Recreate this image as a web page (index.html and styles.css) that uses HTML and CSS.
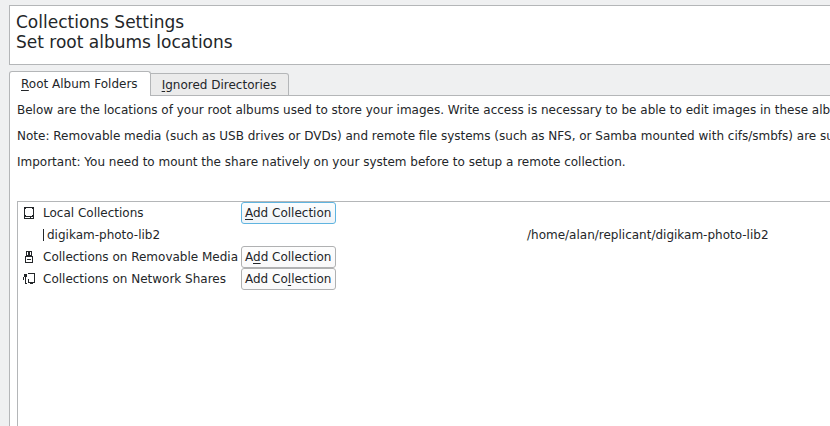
FILE: index.html
```html
<!DOCTYPE html>
<html lang="en">
<head>
<meta charset="utf-8">
<title>Collections Settings</title>
<link rel="stylesheet" href="styles.css">
</head>
<body>
<header class="title-box">
  <h1>Collections Settings</h1>
  <p>Set root albums locations</p>
</header>
<main class="tabs">
  <div class="tab-bar" role="tablist">
    <button class="tab active" type="button" role="tab" aria-selected="true" aria-controls="roots"><u>R</u>oot Album Folders</button>
    <button class="tab" type="button" role="tab" aria-selected="false"><u>I</u>gnored Directories</button>
  </div>
  <section class="panel" id="roots" role="tabpanel">
    <div class="notes">
      <p>Below are the locations of your root albums used to store your images. Write access is necessary to be able to edit images in these albums.</p>
      <p>Note: Removable media (such as USB drives or DVDs) and remote file systems (such as NFS, or Samba mounted with cifs/smbfs) are supported.</p>
      <p>Important: You need to mount the share natively on your system before to setup a remote collection.</p>
    </div>
    <div class="list">
      <table>
        <colgroup><col class="icon-col"><col class="name-col"><col class="action-col"><col></colgroup>
        <tbody>
          <tr>
            <td><svg class="icon" viewBox="0 0 12 12" aria-hidden="true"><path d="M1 0h10v12H1zM3 1v1H2v6h1v1h6V8h1V2H9V1zM2 10v1h5v-1zM8 10v1h2v-1z"/></svg></td>
            <td>Local Collections</td>
            <td><button class="add focused" type="button"><u>A</u>dd Collection</button></td>
            <td></td>
          </tr>
          <tr>
            <td></td>
            <td><span class="album">digikam-photo-lib2</span></td>
            <td></td>
            <td>/home/alan/replicant/digikam-photo-lib2</td>
          </tr>
          <tr>
            <td><svg class="icon" viewBox="0 0 12 12" aria-hidden="true"><path d="M3 0h6v5h1v7H2V5h1zM4 1v3h1V1zM7 1v3h1V1zM3 6v5h6V6zM4 8h4v1H4z"/></svg></td>
            <td>Collections on Removable Media</td>
            <td><button class="add" type="button">A<u>d</u>d Collection</button></td>
            <td></td>
          </tr>
          <tr>
            <td><svg class="icon" viewBox="0 0 12 12" aria-hidden="true"><path d="M5 0h7v10H5V6h1v3h5V1H5zM1 1h3v3H1zM0 4h1v3H0zM2 4h1v6h1v1H2zM7 10h3v1H7z"/></svg></td>
            <td>Collections on Network Shares</td>
            <td><button class="add" type="button">Add Co<u>l</u>lection</button></td>
            <td></td>
          </tr>
        </tbody>
      </table>
    </div>
  </section>
</main>
</body>
</html>
```

FILE: styles.css
```css
* {
  box-sizing: border-box;
}

body {
  display: flex;
  flex-direction: column;
  gap: 6px;
  min-height: 100vh;
  margin: 0;
  padding: 5px 0 0 9px;
  overflow: hidden;
  background: #eff0f1;
  color: #232629;
  font: 12px/16px "DejaVu Sans", sans-serif;
  white-space: nowrap;
}

h1,
p {
  margin: 0;
  font-weight: normal;
}

button {
  color: inherit;
  font: inherit;
}

u {
  text-underline-offset: 2px;
  text-decoration-thickness: 1px;
  text-decoration-skip-ink: none;
}

.title-box {
  padding: 6px 6px 12px;
  border: 1px solid #b4b6b8;
  border-right: 0;
  background: #fff;
  font-size: 17px;
  line-height: 20px;
}

.title-box h1 {
  font-size: inherit;
}

.tabs {
  display: flex;
  flex: 1;
  flex-direction: column;
}

.tab-bar {
  display: flex;
  align-items: flex-end;
}

.tab {
  height: 23px;
  margin-bottom: -1px;
  padding: 0 12px 0 11px;
  border: 1px solid #b4b6b8;
  border-left: 0;
  border-radius: 0 3px 0 0;
  background: #ebebeb;
}

.tab.active {
  z-index: 1;
  height: 25px;
  border-bottom: 0;
  border-left: 1px solid #b4b6b8;
  border-radius: 3px 3px 0 0;
  background: #fff;
}

.panel {
  display: flex;
  flex: 1;
  flex-direction: column;
  gap: 31px;
  padding: 6px 0 0 7px;
  border: solid #b4b6b8;
  border-width: 1px 0 0 1px;
  background: #fff;
}

.notes {
  display: flex;
  flex-direction: column;
  gap: 10px;
}

.notes p {
  overflow: hidden;
}

.list {
  flex: 1;
  border: solid #b4b6b8;
  border-width: 1px 0 0 1px;
}

table {
  width: 100%;
  border-collapse: collapse;
  table-layout: fixed;
}

.icon-col {
  width: 25px;
}

.name-col {
  width: 198px;
}

.action-col {
  width: 286px;
}

td {
  height: 22px;
  padding: 0;
}

.icon {
  display: block;
  width: 12px;
  height: 12px;
  margin-left: 5px;
  fill: #232629;
  fill-rule: evenodd;
  shape-rendering: crispEdges;
}

.album {
  display: block;
  height: 12px;
  padding-left: 3px;
  border-left: 1px solid #232629;
  line-height: 12px;
}

.add {
  display: block;
  height: 22px;
  padding: 0 4px 0 3px;
  border: 1px solid #b0b1b2;
  border-radius: 3px;
  background: linear-gradient(#fdfdfd, #f9f9fa);
}

.add.focused {
  border-color: #5fb4e0;
  background: linear-gradient(#fbfdfe, #eff4f8);
}
```
